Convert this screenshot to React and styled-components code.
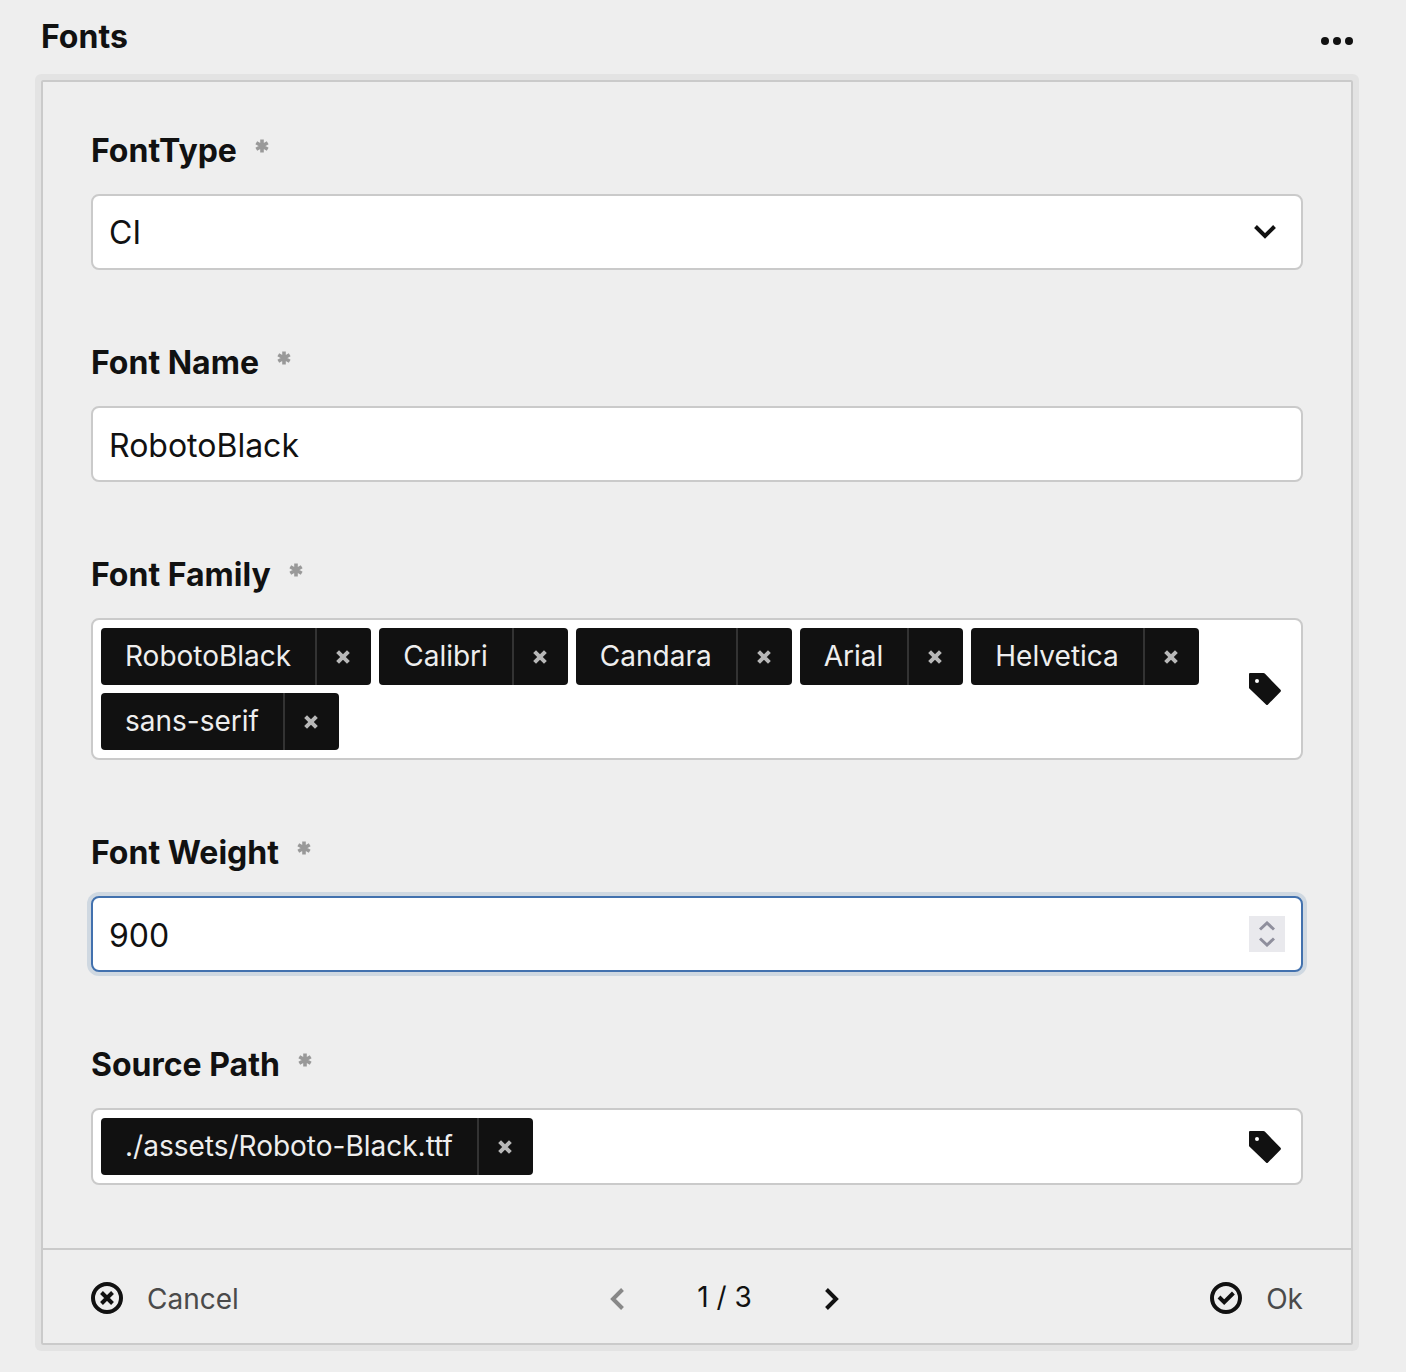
import React, { useState } from "react";
import styled, { createGlobalStyle, css } from "styled-components";

const GlobalStyle = createGlobalStyle`
  *, *::before, *::after { box-sizing: border-box; }
  body {
    margin: 0;
    background: #eee;
    color: #111;
    font-family: Inter, "Liberation Sans", sans-serif;
    font-size: 32px;
    line-height: 40px;
  }
  svg { display: block; flex: none; }
`;

const Page = styled.main`
  padding: 17px 53px 27px 41px;
`;

const Header = styled.header`
  display: flex;
  justify-content: space-between;
  align-items: flex-start;
  margin-bottom: 15px;
`;

const Title = styled.h2`
  margin: 0;
  font-size: 32px;
  line-height: 40px;
  font-weight: 700;
`;

const IconButton = styled.button`
  display: flex;
  align-items: center;
  justify-content: center;
  min-width: 32px;
  height: 48px;
  padding: 0;
  border: 0;
  background: none;
  color: #111;
  cursor: pointer;

  &:disabled {
    color: #888;
    cursor: default;
  }
`;

const Panel = styled.form`
  border: 2px solid #cacaca;
  border-radius: 2px;
  box-shadow: 0 0 0 6px #e3e3e3;
`;

const Fields = styled.div`
  display: flex;
  flex-direction: column;
  gap: 72px;
  padding: 48px 48px 63px;
`;

const Field = styled.div`
  display: flex;
  flex-direction: column;
  gap: 22px;
`;

const Label = styled.label`
  display: flex;
  align-items: flex-start;
  gap: 18px;
  line-height: 42px;
  font-weight: 700;

  svg { margin-top: 9px; color: #999; }
`;

const frame = css`
  width: 100%;
  border: 2px solid #cacaca;
  border-radius: 8px;
  background: #fff;
  color: #111;
`;

const control = css`
  ${frame}
  height: 76px;
  padding: 2px 16px 0;
  font: inherit;
  outline: none;
  appearance: none;
`;

const ControlWrap = styled.div`
  position: relative;
`;

const Select = styled.select`
  ${control}
`;

const TextInput = styled.input`
  ${control}
  ${(p) =>
    p.$active &&
    css`
      border-color: #4271ae;
      box-shadow: 0 0 0 4px #cfd8e1;
    `}

  &::-webkit-inner-spin-button,
  &::-webkit-outer-spin-button {
    appearance: none;
    margin: 0;
  }
`;

const ControlIcon = styled.span`
  position: absolute;
  top: 0;
  bottom: 0;
  right: 26px;
  display: flex;
  align-items: center;
  pointer-events: none;
`;

const Stepper = styled.div`
  position: absolute;
  top: 20px;
  right: 18px;
  display: flex;
  flex-direction: column;
  width: 36px;
  height: 36px;
  background: #e9e9ed;
`;

const StepButton = styled.button`
  display: flex;
  flex: 1;
  align-items: center;
  justify-content: center;
  padding: ${(p) => (p.$up ? "2px 0 0" : "0 0 2px")};
  border: 0;
  background: none;
  color: #8f8f9d;
`;

const TagBox = styled.div`
  ${frame}
  display: flex;
  align-items: center;
  padding: 8px;
`;

const TagList = styled.div`
  display: flex;
  flex: 1;
  flex-wrap: wrap;
  gap: 8px;
`;

const TagMark = styled.span`
  padding: 0 12px 0 40px;
`;

const Tag = styled.span`
  display: flex;
  height: 57px;
  border-radius: 4px;
  background: #111;
  color: #eee;
  font-size: 28px;
  line-height: 56px;
`;

const TagText = styled.span`
  padding: 0 24px;
`;

const TagRemove = styled.button`
  display: flex;
  align-items: center;
  justify-content: center;
  width: 56px;
  padding: 0 2px 0 0;
  border: 0;
  border-left: 2px solid #333;
  background: none;
  color: #b8b8b8;
  cursor: pointer;
`;

const TagInput = styled.input`
  flex: 1;
  width: 40px;
  min-width: 40px;
  padding: 0;
  border: 0;
  background: none;
  outline: none;
  font: inherit;
  font-size: 28px;
`;

const Footer = styled.footer`
  display: flex;
  justify-content: space-between;
  align-items: center;
  height: 95px;
  padding: 2px 48px 0;
  border-top: 2px solid #cacaca;
  font-size: 28px;
`;

const Action = styled.button`
  display: flex;
  align-items: center;
  gap: 24px;
  padding: 0;
  border: 0;
  background: none;
  color: #4a4a4a;
  font: inherit;
  cursor: pointer;

  svg { color: #111; }
`;

const ActionText = styled.span`
  padding-top: 2px;
`;

const Pager = styled.nav`
  display: flex;
  align-items: center;
  gap: 64px;
  padding-top: 2px;
`;

const PageCount = styled.span`
  padding-bottom: 4px;
`;

const Asterisk = () => (
  <svg width="14" height="14" viewBox="0 0 14 14" aria-hidden="true">
    <path d="M7 .5v13M1.3 3.7l11.4 6.6M1.3 10.3l11.4-6.6" stroke="currentColor" strokeWidth="3.6" />
  </svg>
);

const Chevron = ({ points, width, height, stroke = 4 }) => (
  <svg width={width} height={height} aria-hidden="true">
    <polyline points={points} fill="none" stroke="currentColor" strokeWidth={stroke} />
  </svg>
);

const Cross = () => (
  <svg width="14" height="14" viewBox="0 0 14 14" aria-hidden="true">
    <path d="M1.6 1.6l10.8 10.8M12.4 1.6L1.6 12.4" stroke="currentColor" strokeWidth="4" />
  </svg>
);

const Dots = () => (
  <svg width="32" height="8" fill="currentColor" aria-hidden="true">
    <circle cx="4" cy="4" r="4" />
    <circle cx="16" cy="4" r="4" />
    <circle cx="28" cy="4" r="4" />
  </svg>
);

const TagGlyph = () => (
  <svg width="32" height="32" viewBox="0 0 32 32" aria-hidden="true">
    <path
      fill="#111"
      fillRule="evenodd"
      d="M1 0H14.4Q15.2 0 15.8.6L31.5 16.8Q32.4 17.8 31.5 18.8L19 31.4Q18 32.4 17 31.4L.6 15.8Q0 15.2 0 14.4V1Q0 0 1 0ZM8 6a2 2 0 1 0 0 4 2 2 0 0 0 0-4Z"
    />
  </svg>
);

const RingIcon = ({ d }) => (
  <svg width="32" height="32" viewBox="0 0 32 32" fill="none" stroke="currentColor" strokeWidth="4" aria-hidden="true">
    <circle cx="16" cy="16" r="14" />
    <path d={d} />
  </svg>
);

function FieldLabel({ htmlFor, children }) {
  return (
    <Label htmlFor={htmlFor}>
      {children}
      <Asterisk />
    </Label>
  );
}

function TagField({ id, label, initial }) {
  const [tags, setTags] = useState(initial);
  return (
    <Field>
      <FieldLabel htmlFor={id}>{label}</FieldLabel>
      <TagBox>
        <TagList>
          {tags.map((tag) => (
            <Tag key={tag}>
              <TagText>{tag}</TagText>
              <TagRemove type="button" aria-label={`Remove ${tag}`} onClick={() => setTags(tags.filter((t) => t !== tag))}>
                <Cross />
              </TagRemove>
            </Tag>
          ))}
          <TagInput id={id} type="text" />
        </TagList>
        <TagMark>
          <TagGlyph />
        </TagMark>
      </TagBox>
    </Field>
  );
}

export default function App() {
  const [name, setName] = useState("RobotoBlack");
  const [weight, setWeight] = useState(900);
  const step = (by) => setWeight(Number(weight) + by);

  return (
    <>
      <GlobalStyle />
      <Page>
        <Header>
          <Title>Fonts</Title>
          <IconButton type="button" aria-label="Options">
            <Dots />
          </IconButton>
        </Header>
        <Panel onSubmit={(e) => e.preventDefault()}>
          <Fields>
            <Field>
              <FieldLabel htmlFor="type">FontType</FieldLabel>
              <ControlWrap>
                <Select id="type" defaultValue="CI">
                  <option>CI</option>
                </Select>
                <ControlIcon>
                  <Chevron width={24} height={14} points="2.5,1.5 12,11 21.5,1.5" />
                </ControlIcon>
              </ControlWrap>
            </Field>
            <Field>
              <FieldLabel htmlFor="name">Font Name</FieldLabel>
              <TextInput id="name" type="text" value={name} onChange={(e) => setName(e.target.value)} />
            </Field>
            <TagField
              id="family"
              label="Font Family"
              initial={["RobotoBlack", "Calibri", "Candara", "Arial", "Helvetica", "sans-serif"]}
            />
            <Field>
              <FieldLabel htmlFor="weight">Font Weight</FieldLabel>
              <ControlWrap>
                <TextInput id="weight" type="number" $active value={weight} onChange={(e) => setWeight(e.target.value)} />
                <Stepper>
                  <StepButton $up type="button" aria-label="Increase" onClick={() => step(100)}>
                    <Chevron width={16} height={10} stroke={3} points="1,8.5 8,2 15,8.5" />
                  </StepButton>
                  <StepButton type="button" aria-label="Decrease" onClick={() => step(-100)}>
                    <Chevron width={16} height={10} stroke={3} points="1,1.5 8,8 15,1.5" />
                  </StepButton>
                </Stepper>
              </ControlWrap>
            </Field>
            <TagField id="source" label="Source Path" initial={["./assets/Roboto-Black.ttf"]} />
          </Fields>
          <Footer>
            <Action type="button">
              <RingIcon d="M10.5 10.5l11 11M21.5 10.5l-11 11" />
              <ActionText>Cancel</ActionText>
            </Action>
            <Pager aria-label="Entries">
              <IconButton type="button" disabled aria-label="Previous">
                <Chevron width={14} height={24} points="12.5,2.5 3,12 12.5,21.5" />
              </IconButton>
              <PageCount>1 / 3</PageCount>
              <IconButton type="button" aria-label="Next">
                <Chevron width={14} height={24} points="1.5,2.5 11,12 1.5,21.5" />
              </IconButton>
            </Pager>
            <Action type="submit">
              <RingIcon d="M9 15l5.2 5.2L23.4 11" />
              <ActionText>Ok</ActionText>
            </Action>
          </Footer>
        </Panel>
      </Page>
    </>
  );
}
